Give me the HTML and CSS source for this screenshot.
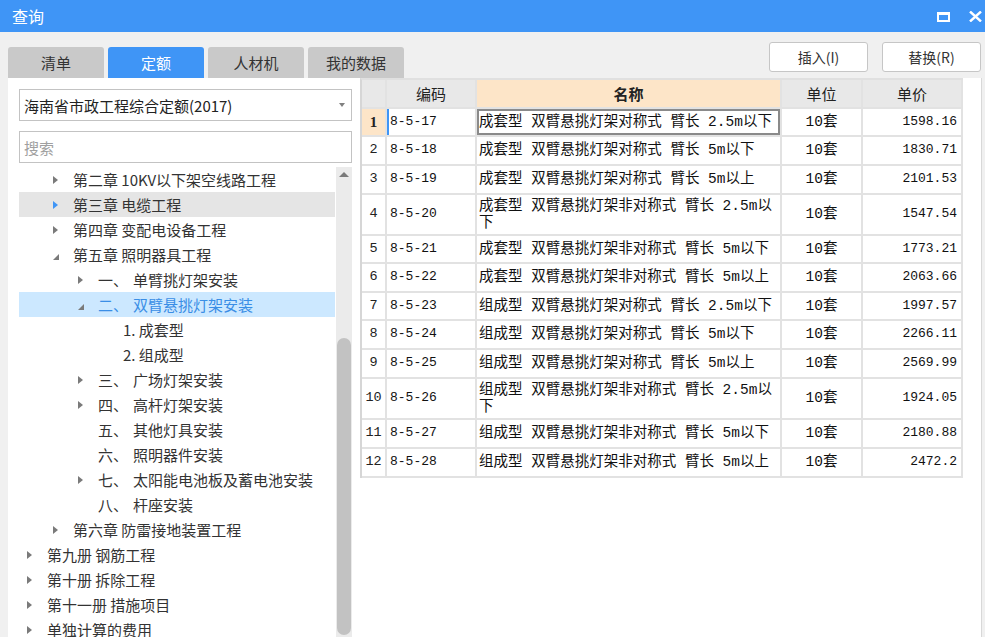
FILE: index.html
```html
<!DOCTYPE html>
<html lang="zh-CN">
<head>
<meta charset="utf-8">
<title>查询</title>
<link rel="stylesheet" href="styles.css">
</head>
<body>
<div class="titlebar">
  <span class="title">查询</span>
  <div class="win-ctrls">
    <svg class="ic-max" width="13" height="10" viewBox="0 0 13 10"><rect x="1" y="1.5" width="11" height="7.5" fill="none" stroke="#fff" stroke-width="2"/><rect x="0" y="0" width="13" height="3" fill="#fff"/></svg>
    <svg class="ic-close" width="13" height="11" viewBox="0 0 13 11"><path d="M1 0.5 L12 10.5 M12 0.5 L1 10.5" stroke="#fff" stroke-width="2.4" fill="none"/></svg>
  </div>
</div>
<div class="main">
  <div class="left">
    <div class="tabs">
      <div class="tab">清单</div>
      <div class="tab active">定额</div>
      <div class="tab">人材机</div>
      <div class="tab">我的数据</div>
    </div>
    <div class="lpanel">
      <div class="select"><span class="select-text">海南省市政工程综合定额(2017)</span><span class="caret"></span></div>
      <input class="search" type="text" placeholder="搜索">
      <div class="treewrap">
        <ul class="tree">
          <li class="node l2"><i class="arr r"></i><span>第二章 10KV以下架空线路工程</span></li>
          <li class="node l2 hover"><i class="arr r"></i><span>第三章 电缆工程</span></li>
          <li class="node l2"><i class="arr r"></i><span>第四章 变配电设备工程</span></li>
          <li class="node l2"><i class="arr d"></i><span>第五章 照明器具工程</span></li>
          <li class="node l3"><i class="arr r"></i><span class="num">一、</span><span>单臂挑灯架安装</span></li>
          <li class="node l3 sel"><i class="arr d"></i><span class="num">二、</span><span>双臂悬挑灯架安装</span></li>
          <li class="node l4"><i class="arr"></i><span>1. 成套型</span></li>
          <li class="node l4"><i class="arr"></i><span>2. 组成型</span></li>
          <li class="node l3"><i class="arr r"></i><span class="num">三、</span><span>广场灯架安装</span></li>
          <li class="node l3"><i class="arr r"></i><span class="num">四、</span><span>高杆灯架安装</span></li>
          <li class="node l3"><i class="arr"></i><span class="num">五、</span><span>其他灯具安装</span></li>
          <li class="node l3"><i class="arr"></i><span class="num">六、</span><span>照明器件安装</span></li>
          <li class="node l3"><i class="arr r"></i><span class="num">七、</span><span>太阳能电池板及蓄电池安装</span></li>
          <li class="node l3"><i class="arr"></i><span class="num">八、</span><span>杆座安装</span></li>
          <li class="node l2"><i class="arr r"></i><span>第六章 防雷接地装置工程</span></li>
          <li class="node l1"><i class="arr r"></i><span>第九册 钢筋工程</span></li>
          <li class="node l1"><i class="arr r"></i><span>第十册 拆除工程</span></li>
          <li class="node l1"><i class="arr r"></i><span>第十一册 措施项目</span></li>
          <li class="node l1"><i class="arr r"></i><span>单独计算的费用</span></li>
        </ul>
        <div class="vscroll"><span class="up"></span><div class="thumb"></div></div>
      </div>
    </div>
  </div>
  <div class="right">
    <div class="actions">
      <button class="btn">插入(I)</button>
      <button class="btn">替换(R)</button>
    </div>
    <div class="rpanel">
      <div class="grid">
        <div class="c h"></div><div class="c h">编码</div><div class="c h hname">名称</div><div class="c h">单位</div><div class="c h">单价</div>

        <div class="c rn cur">1</div><div class="c code cur">8-5-17</div><div class="c name cur">成套型 双臂悬挑灯架对称式 臂长 2.5m以下</div><div class="c unit">10套</div><div class="c price">1598.16</div>
        <div class="c rn">2</div><div class="c code">8-5-18</div><div class="c name">成套型 双臂悬挑灯架对称式 臂长 5m以下</div><div class="c unit">10套</div><div class="c price">1830.71</div>
        <div class="c rn">3</div><div class="c code">8-5-19</div><div class="c name">成套型 双臂悬挑灯架对称式 臂长 5m以上</div><div class="c unit">10套</div><div class="c price">2101.53</div>
        <div class="c rn">4</div><div class="c code">8-5-20</div><div class="c name">成套型 双臂悬挑灯架非对称式 臂长 2.5m以<br>下</div><div class="c unit">10套</div><div class="c price">1547.54</div>
        <div class="c rn">5</div><div class="c code">8-5-21</div><div class="c name">成套型 双臂悬挑灯架非对称式 臂长 5m以下</div><div class="c unit">10套</div><div class="c price">1773.21</div>
        <div class="c rn">6</div><div class="c code">8-5-22</div><div class="c name">成套型 双臂悬挑灯架非对称式 臂长 5m以上</div><div class="c unit">10套</div><div class="c price">2063.66</div>
        <div class="c rn">7</div><div class="c code">8-5-23</div><div class="c name">组成型 双臂悬挑灯架对称式 臂长 2.5m以下</div><div class="c unit">10套</div><div class="c price">1997.57</div>
        <div class="c rn">8</div><div class="c code">8-5-24</div><div class="c name">组成型 双臂悬挑灯架对称式 臂长 5m以下</div><div class="c unit">10套</div><div class="c price">2266.11</div>
        <div class="c rn">9</div><div class="c code">8-5-25</div><div class="c name">组成型 双臂悬挑灯架对称式 臂长 5m以上</div><div class="c unit">10套</div><div class="c price">2569.99</div>
        <div class="c rn">10</div><div class="c code">8-5-26</div><div class="c name">组成型 双臂悬挑灯架非对称式 臂长 2.5m以<br>下</div><div class="c unit">10套</div><div class="c price">1924.05</div>
        <div class="c rn">11</div><div class="c code">8-5-27</div><div class="c name">组成型 双臂悬挑灯架非对称式 臂长 5m以下</div><div class="c unit">10套</div><div class="c price">2180.88</div>
        <div class="c rn">12</div><div class="c code">8-5-28</div><div class="c name">组成型 双臂悬挑灯架非对称式 臂长 5m以上</div><div class="c unit">10套</div><div class="c price">2472.2</div>
      </div>
    </div>
  </div>
</div>
</body>
</html>
```

FILE: styles.css
```css
* { box-sizing: border-box; margin: 0; padding: 0; }

body {
  width: 985px;
  height: 637px;
  overflow: hidden;
  background: #f0f0f0;
  font-family: "Noto Sans CJK SC", "Microsoft YaHei", sans-serif;
  color: #333;
}

.titlebar {
  height: 32px;
  background: #3f95f6;
  display: flex;
  align-items: center;
  padding: 0 3px 0 12px;
  color: #fff;
}
.title { flex: 1; font-size: 16px; }
.win-ctrls { display: flex; align-items: center; gap: 19px; }
.ic-max { margin-top: 1px; }

.main {
  display: flex;
  height: 605px;
  padding: 0 3px 0 8px;
}

/* left column */
.left {
  width: 352px;
  flex: none;
  display: flex;
  flex-direction: column;
}
.tabs {
  display: flex;
  gap: 4px;
  margin-top: 15px;
  height: 31px;
  width: 396px;
  flex: none;
}
.tab {
  width: 96px;
  height: 31px;
  background: #c9c9c9;
  border-radius: 3px 3px 0 0;
  font-size: 15px;
  color: #333;
  display: flex;
  align-items: center;
  justify-content: center;
}
.tab.active { background: #3f95f6; color: #fff; }

.lpanel {
  flex: 1;
  min-height: 0;
  background: #fff;
  padding: 11px 8px 0 11px;
  overflow: hidden;
  display: flex;
  flex-direction: column;
}
.select {
  height: 32px;
  flex: none;
  border: 1px solid #c3c3c3;
  display: flex;
  align-items: center;
  padding: 0 6px 0 4px;
  font-size: 15px;
  color: #222;
}
.select-text { flex: 1; }
.caret {
  flex: none;
  width: 0;
  height: 0;
  border-left: 3.5px solid transparent;
  border-right: 3.5px solid transparent;
  border-top: 4px solid #808080;
}
.search {
  margin-top: 10px;
  height: 32px;
  flex: none;
  width: 100%;
  border: 1px solid #c3c3c3;
  font: 15px "Noto Sans CJK SC", sans-serif;
  padding: 0 4px;
  outline: none;
  color: #333;
}
.search::placeholder { color: #a0a0a0; }

.treewrap {
  margin-top: 4px;
  flex: 1;
  min-height: 0;
  display: flex;
}
.tree {
  list-style: none;
  width: 316px;
  overflow: hidden;
}
.node {
  height: 25px;
  display: flex;
  align-items: center;
  font-size: 15px;
  color: #333;
  white-space: nowrap;
}
.l1 { padding-left: 8px; }
.l2 { padding-left: 34px; }
.l3 { padding-left: 59px; }
.l4 { padding-left: 84px; }
.arr {
  width: 20px;
  height: 25px;
  flex: none;
  display: flex;
  align-items: center;
}
.arr.r::before {
  content: "";
  width: 0;
  height: 0;
  border-left: 5px solid #7a7a7a;
  border-top: 4.5px solid transparent;
  border-bottom: 4.5px solid transparent;
}
.arr.d::before {
  content: "";
  width: 0;
  height: 0;
  margin-top: 4px;
  border-bottom: 6px solid #7a7a7a;
  border-left: 6px solid transparent;
}
.node.hover { background: #e5e5e5; }
.node.hover .arr.r::before { border-left-color: #3f95f6; }
.node.sel { background: #cce8ff; color: #3a8ee6; }
.num { display: inline-block; width: 35px; }

.vscroll {
  width: 16px;
  margin-left: 1px;
  flex: none;
  background: #ebebeb;
  display: flex;
  flex-direction: column;
  align-items: center;
}
.up {
  margin-top: 5px;
  width: 0;
  height: 0;
  border-left: 5px solid transparent;
  border-right: 5px solid transparent;
  border-bottom: 5px solid #7a7a7a;
}
.thumb {
  margin-top: 161px;
  width: 14px;
  height: 297px;
  background: #c2c2c2;
  border-radius: 7px;
  flex: none;
}

/* right column */
.right {
  flex: 1;
  display: flex;
  flex-direction: column;
}
.actions {
  display: flex;
  justify-content: flex-end;
  gap: 14px;
  margin-top: 10px;
  padding-right: 1px;
}
.btn {
  width: 99px;
  height: 30px;
  background: #fff;
  border: 1px solid #c6c6c6;
  border-radius: 3px;
  font: 14px "Noto Sans CJK SC", sans-serif;
  color: #333;
}
.rpanel {
  margin-top: 6px;
  flex: 1;
  background: #fff;
  border-right: 1px solid #d8d8d8;
}

.grid {
  display: grid;
  grid-template-columns: 25px 90px 305px 81px 100px;
  grid-template-rows: 29px 28px 29px 29px 41px 28px 29px 28px 29px 29px 41px 29px 29px;
  width: max-content;
  border-left: 2px solid #d6d6d6;
  border-top: 2px solid #e0e0e0;
}
.c {
  border-right: 2px solid #e2e2e2;
  border-bottom: 2px solid #e2e2e2;
  display: flex;
  align-items: center;
  font: 14.5px/16.5px "Liberation Mono", "Noto Sans CJK SC", monospace;
  color: #111;
  white-space: nowrap;
  overflow: hidden;
}
.h {
  background: #e8e8e8;
  justify-content: center;
  font: 15px/20px "Noto Sans CJK SC", sans-serif;
  color: #222;
}
.hname { background: #fde5c8; font-weight: bold; }
.rn { justify-content: center; font-size: 13.5px; color: #222; }
.rn.cur { background: #fde5c8; font: bold 15px "Liberation Serif", serif; }
.code { padding-left: 3px; font-size: 13px; }
.code.cur { box-shadow: inset 2px 0 0 #3f95f6; }
.name { padding-left: 2px; }
.name.cur { box-shadow: inset 0 0 0 2px #8a8a8a; }
.unit { justify-content: center; }
.price { justify-content: flex-end; padding-right: 4px; font-size: 13px; }
```
